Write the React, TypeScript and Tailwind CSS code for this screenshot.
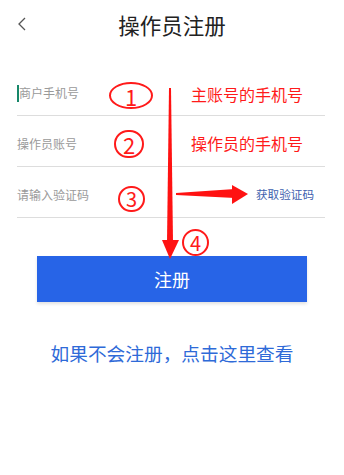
import React from 'react';

const font = { fontFamily: '"Noto Sans CJK SC", "Liberation Sans", sans-serif' };

const Circle: React.FC<{ n: string; className: string }> = ({ n, className }) => (
  <div
    className={`absolute flex items-center justify-center rounded-full border-2 border-[#ff1a1a] text-[#ff1a1a] leading-none ${className}`}
  >
    {n}
  </div>
);

const App: React.FC = () => {
  return (
    <div className="relative w-[344px] h-[475px] bg-white overflow-hidden" style={font}>
      {/* header */}
      <div className="relative h-[50px] flex items-center justify-center">
        <svg className="absolute left-[17px] top-[17px]" width="10" height="14" viewBox="0 0 10 14">
          <path d="M8 1 L2 7 L8 13" fill="none" stroke="#555" strokeWidth="1.3" />
        </svg>
        <h1 className="text-[21.5px] text-[#222] leading-none">操作员注册</h1>
      </div>

      {/* form */}
      <div className="mt-[15px] ml-[17px] mr-[19px]">
        <div className="h-[51px] border-b border-[#dddddd] flex items-center pt-[6px]">
          <span className="w-[2px] h-[17px] bg-[#17876a]" />
          <span className="text-[12px] text-[#9a9a9a]">商户手机号</span>
        </div>
        <div className="h-[51px] border-b border-[#dddddd] flex items-center pt-[6px]">
          <span className="text-[12px] text-[#9a9a9a]">操作员账号</span>
        </div>
        <div className="h-[51px] border-b border-[#dddddd] flex items-center justify-between pt-[6px]">
          <span className="text-[12px] text-[#9a9a9a]">请输入验证码</span>
          <span className="text-[11.6px] text-[#3d5fae] mr-[11px]">获取验证码</span>
        </div>
      </div>

      <div className="mt-[38px] flex justify-center">
        <button className="w-[270px] h-[46px] bg-[#2764e7] text-white text-[18px] shadow-[0_2px_3px_rgba(0,0,0,0.12)]">
          注册
        </button>
      </div>

      <p className="mt-[42px] text-center text-[18.7px] text-[#2e6ad8] leading-none">
        如果不会注册，点击这里查看
      </p>

      {/* annotations */}
      <div className="absolute left-[109px] top-[82px] w-[44px] h-[27px] rounded-[50%] border-2 border-[#ff1a1a] flex items-center justify-center text-[#ff1a1a] text-[22px] leading-none">
        1
      </div>
      <Circle n="2" className="left-[114px] top-[130px] w-[30px] h-[28px] text-[22px]" />
      <Circle n="3" className="left-[118px] top-[186px] w-[27px] h-[26px] text-[20px]" />
      <Circle n="4" className="left-[182px] top-[229px] w-[27px] h-[27px] text-[20px]" />

      <div className="absolute left-[191px] top-[86px] text-[16px] text-[#ff1a1a] leading-none">主账号的手机号</div>
      <div className="absolute left-[191px] top-[135px] text-[16px] text-[#ff1a1a] leading-none">操作员的手机号</div>

      <svg className="absolute left-0 top-0 pointer-events-none" width="344" height="475" viewBox="0 0 344 475">
        <polygon points="169,88 171,88 173,242 167,242" fill="#ff1212" />
        <polygon points="162,240 179,240 170,259" fill="#ff1212" />
        <polygon points="176,193 176,195 235,198 235,189" fill="#ff1212" />
        <polygon points="232,185 232,204 248,194" fill="#ff1212" />
      </svg>
    </div>
  );
};

export default App;
